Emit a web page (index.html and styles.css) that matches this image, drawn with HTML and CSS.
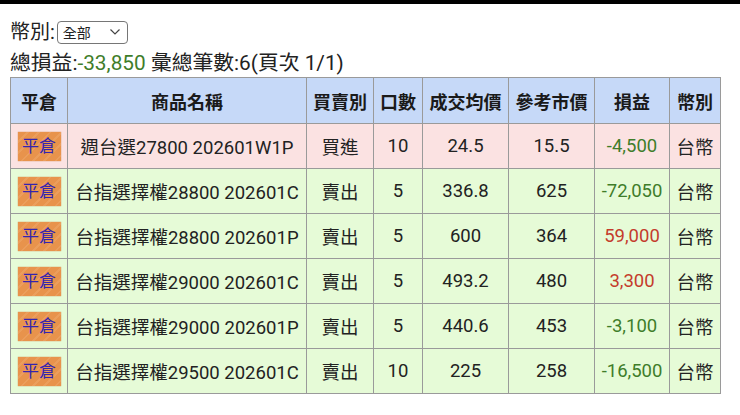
FILE: index.html
```html
<!DOCTYPE html>
<html lang="zh-Hant">
<head>
<meta charset="utf-8">
<link rel="stylesheet" href="styles.css">
</head>
<body>
<div class="topbar"></div>
<div class="page">
  <div class="filter">
    <span class="label">幣別:</span>
    <span class="select"><span class="sel-text">全部</span><svg class="chev" width="12" height="8" viewBox="0 0 12 8"><path d="M1.5 1.5 L6 6 L10.5 1.5" fill="none" stroke="#444" stroke-width="1.2"/></svg></span>
  </div>
  <div class="summary">總損益:<span class="neg">-33,850</span> 彙總筆數:6(頁次 1/1)</div>
  <table class="grid">
    <colgroup>
      <col class="c1"><col class="c2"><col class="c3"><col class="c4"><col class="c5"><col class="c6"><col class="c7"><col class="c8">
    </colgroup>
    <thead>
      <tr><th>平倉</th><th>商品名稱</th><th>買賣別</th><th>口數</th><th>成交均價</th><th>參考市價</th><th>損益</th><th>幣別</th></tr>
    </thead>
    <tbody>
      <tr class="buy"><td><span class="btn">平倉</span></td><td>週台選27800 202601W1P</td><td>買進</td><td>10</td><td>24.5</td><td>15.5</td><td class="neg">-4,500</td><td>台幣</td></tr>
      <tr class="sell"><td><span class="btn">平倉</span></td><td>台指選擇權28800 202601C</td><td>賣出</td><td>5</td><td>336.8</td><td>625</td><td class="neg">-72,050</td><td>台幣</td></tr>
      <tr class="sell"><td><span class="btn">平倉</span></td><td>台指選擇權28800 202601P</td><td>賣出</td><td>5</td><td>600</td><td>364</td><td class="pos">59,000</td><td>台幣</td></tr>
      <tr class="sell"><td><span class="btn">平倉</span></td><td>台指選擇權29000 202601C</td><td>賣出</td><td>5</td><td>493.2</td><td>480</td><td class="pos">3,300</td><td>台幣</td></tr>
      <tr class="sell"><td><span class="btn">平倉</span></td><td>台指選擇權29000 202601P</td><td>賣出</td><td>5</td><td>440.6</td><td>453</td><td class="neg">-3,100</td><td>台幣</td></tr>
      <tr class="sell"><td><span class="btn">平倉</span></td><td>台指選擇權29500 202601C</td><td>賣出</td><td>10</td><td>225</td><td>258</td><td class="neg">-16,500</td><td>台幣</td></tr>
    </tbody>
  </table>
</div>
</body>
</html>
```
FILE: styles.css
```css
html, body {
  margin: 0;
  padding: 0;
  background: #fff;
}
body {
  font-family: Roboto, "Noto Sans CJK TC", sans-serif;
  color: #222;
}
.topbar {
  height: 4px;
  background: #000;
}
.page {
  padding: 15px 0 0 10px;
}
.filter {
  display: flex;
  align-items: center;
  height: 26px;
  font-size: 20px;
}
.label {
  line-height: 26px;
}
.select {
  display: inline-flex;
  align-items: center;
  justify-content: space-between;
  box-sizing: border-box;
  width: 71px;
  height: 23px;
  margin-left: 2px;
  padding: 0 6px 0 5px;
  border: 1px solid #767676;
  border-radius: 4px;
  font-size: 14px;
  background: #fff;
}
.chev { display: block; }
.summary {
  margin-top: 5px;
  font-size: 20.8px;
  line-height: 26px;
  height: 27px;
}
.neg { color: #3f7d2a; }
.pos { color: #c43c2c; }
.grid {
  border-collapse: collapse;
  table-layout: fixed;
  width: 710px;
  font-size: 18.5px;
}
.c1 { width: 57px; }
.c2 { width: 239px; }
.c3 { width: 67px; }
.c4 { width: 49px; }
.c5 { width: 86px; }
.c6 { width: 86px; }
.c7 { width: 75px; }
.c8 { width: 51px; }
.grid th, .grid td {
  border: 1px solid #9a9a9a;
  text-align: center;
  padding: 0;
  white-space: nowrap;
}
.grid th {
  height: 45px;
  background: #c6d9f8;
  font-weight: bold;
  font-size: 18px;
  color: #1a1a1a;
}
.grid td {
  height: 44px;
}
.buy td { background: #fbe2e2; }
.sell td { background: #e6fbd7; }
.btn {
  display: inline-block;
  width: 43px;
  height: 29px;
  line-height: 29px;
  font-size: 17px;
  color: #3424b0;
  background: repeating-linear-gradient(135deg, #e8934c 0 6px, #eb9e5c 6px 8px);
  box-shadow: 0 0 1px #c87a3a;
  vertical-align: middle;
}
```
